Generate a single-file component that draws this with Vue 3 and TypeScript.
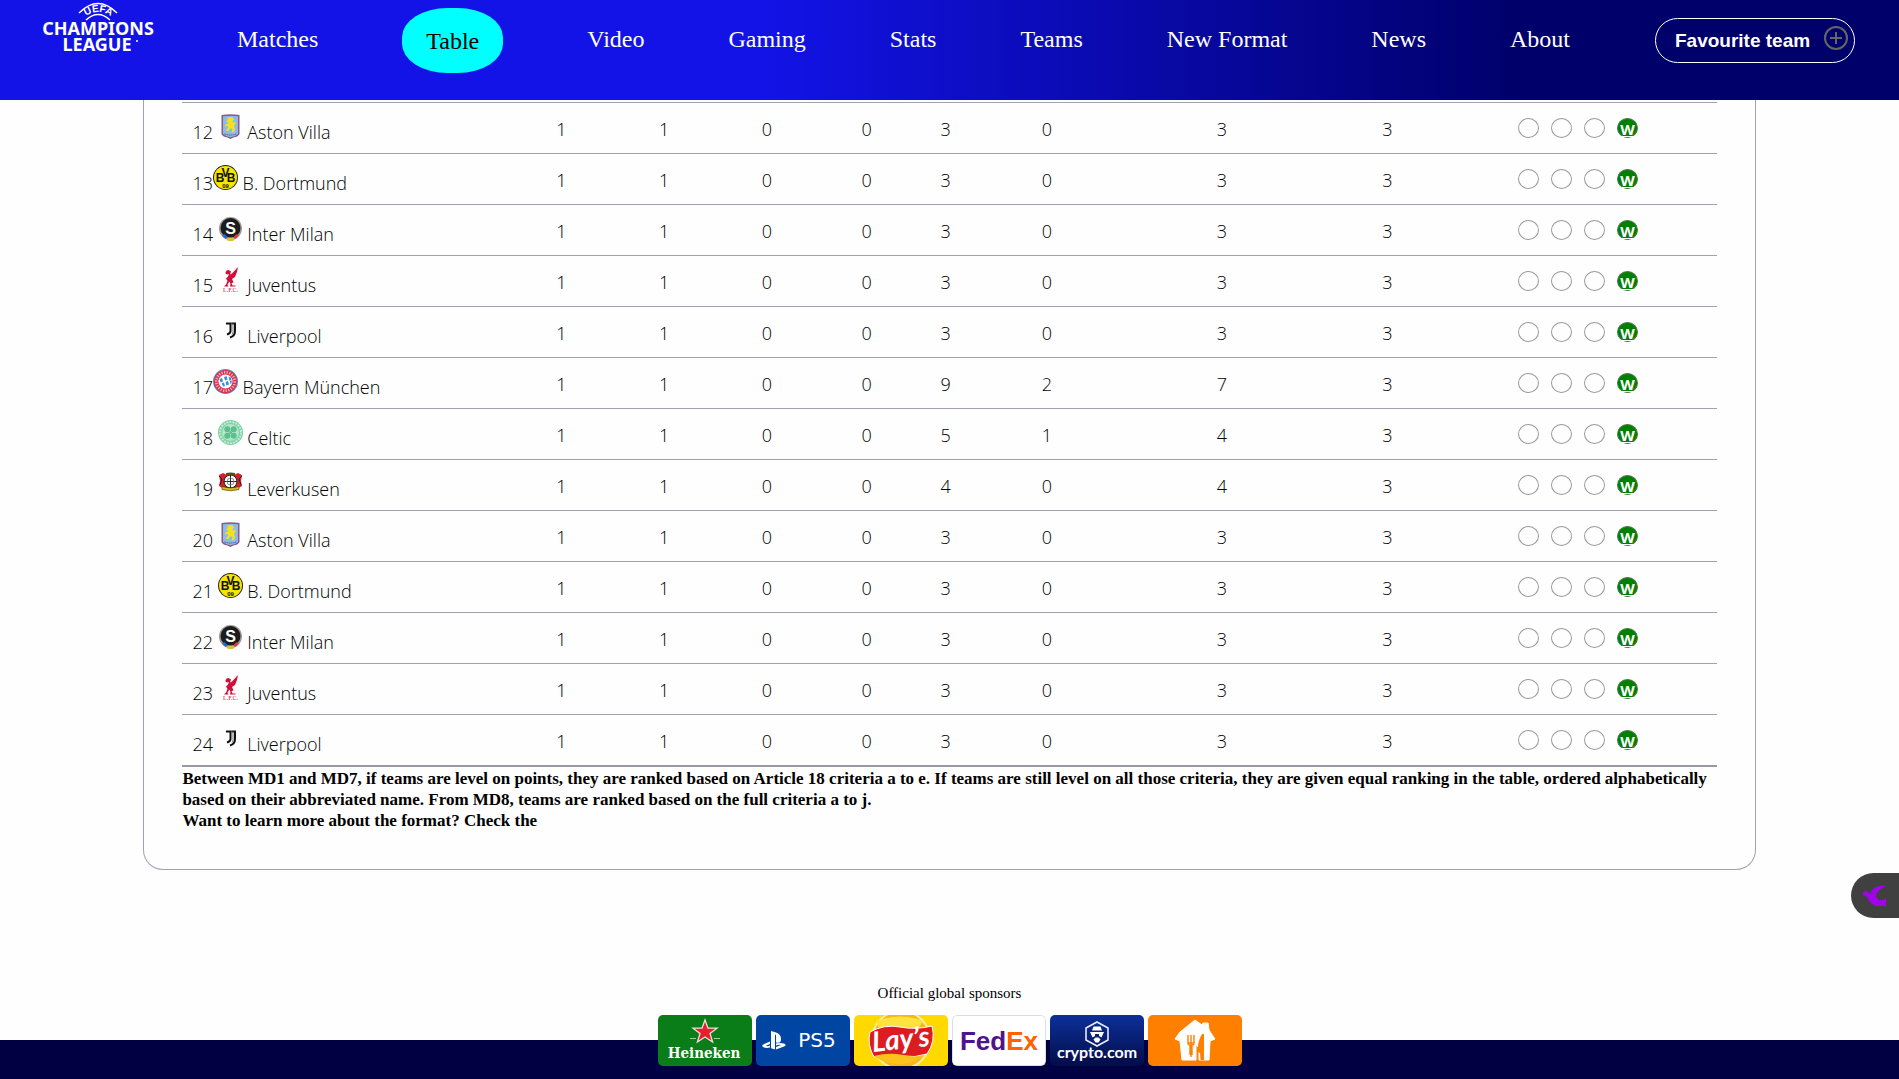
<script setup lang="ts">
type Crest = 'villa' | 'bvb' | 'sparta' | 'lfc' | 'juve' | 'bayern' | 'celtic' | 'leverkusen'

interface Team {
  rank: number
  name: string
  crest: Crest
  stats: number[]
  tight?: boolean
}

const links: string[] = ['Matches', 'Table', 'Video', 'Gaming', 'Stats', 'Teams', 'New Format', 'News', 'About']
const active = 'Table'
const columns: string[] = ['Played', 'Won', 'Drawn', 'Lost', 'For', 'Against', 'Goal difference', 'Points']

const usual = [1, 1, 0, 0, 3, 0, 3, 3]

const teams: Team[] = [
  { rank: 12, name: 'Aston Villa', crest: 'villa', stats: usual },
  { rank: 13, name: 'B. Dortmund', crest: 'bvb', stats: usual, tight: true },
  { rank: 14, name: 'Inter Milan', crest: 'sparta', stats: usual },
  { rank: 15, name: 'Juventus', crest: 'lfc', stats: usual },
  { rank: 16, name: 'Liverpool', crest: 'juve', stats: usual },
  { rank: 17, name: 'Bayern München', crest: 'bayern', stats: [1, 1, 0, 0, 9, 2, 7, 3], tight: true },
  { rank: 18, name: 'Celtic', crest: 'celtic', stats: [1, 1, 0, 0, 5, 1, 4, 3] },
  { rank: 19, name: 'Leverkusen', crest: 'leverkusen', stats: [1, 1, 0, 0, 4, 0, 4, 3] },
  { rank: 20, name: 'Aston Villa', crest: 'villa', stats: usual },
  { rank: 21, name: 'B. Dortmund', crest: 'bvb', stats: usual },
  { rank: 22, name: 'Inter Milan', crest: 'sparta', stats: usual },
  { rank: 23, name: 'Juventus', crest: 'lfc', stats: usual },
  { rank: 24, name: 'Liverpool', crest: 'juve', stats: usual },
]
</script>

<template>
  <div class="page">
    <header class="bar">
      <a class="logo" href="#" aria-label="UEFA Champions League">
        <svg viewBox="0 0 112 60" width="112" height="60" fill="#fff">
          <defs><path id="arc" d="M37 21Q55 3 74 21" /></defs>
          <path d="M36 13Q55 -6 74 13" fill="none" stroke="#fff" stroke-width="1.500" />
          <path d="M43 20Q55 9 67 20" fill="none" stroke="#fff" stroke-width="1.500" />
          <text class="uefa"><textPath href="#arc" startOffset="50%" text-anchor="middle">UEFA</textPath></text>
          <text class="word" x="55" y="35" text-anchor="middle">CHAMPIONS</text>
          <text class="word" x="54" y="51" text-anchor="middle">LEAGUE</text>
          <circle cx="94" cy="41" r="1" />
        </svg>
      </a>
      <nav class="nav">
        <a v-for="l in links" :key="l" href="#" :class="{ active: l === active }">{{ l }}</a>
      </nav>
      <button class="fav" type="button">
        Favourite team
        <svg viewBox="0 0 26 26" width="26" height="26" fill="none" stroke="#666" stroke-width="2">
          <circle cx="13" cy="13" r="11" />
          <path d="M13 7v12M7 13h12" />
        </svg>
      </button>
    </header>

    <main class="card">
      <table>
        <colgroup>
          <col class="c-team" /><col class="c1" /><col class="c2" /><col class="c3" /><col class="c4" />
          <col class="c5" /><col class="c6" /><col class="c7" /><col class="c8" /><col class="c-form" />
        </colgroup>
        <tbody>
          <tr v-for="t in teams" :key="t.rank">
            <th scope="row" class="team">{{ t.tight ? t.rank : t.rank + ' ' }}<svg class="crest" viewBox="0 0 25 25" width="25" height="25" aria-hidden="true">
                <g v-if="t.crest === 'villa'">
                  <path d="M3.500 1Q12.500 -.5 21.500 1V20Q20 23 15.500 23.500L12.500 25L9.500 23.500Q5 23 3.500 20Z" fill="#8b5a80" />
                  <path d="M5 2.300Q12.500 1 20 2.300V19.500Q18.500 22 12.500 23.300Q6.500 22 5 19.500Z" fill="#8dbbe8" />
                  <path d="M9 5l2-2 4 .5 1 2-1.500 1.500 1 2 2-1.500v2.500l-1.500 2 1 3-1 3-2.500.5 1-3-2-1.500-2 3-2.500 0 1-2 1.500-2-1-1-2 .5-.5-2 3-.5-.5-2-1.500-.5 1-1.500 2 .5z" fill="#f6e11c" />
                  <path d="M6.500 20Q12.500 22 18.500 20" stroke="#4a5b86" fill="none" stroke-dasharray="1.500 .6" />
                </g>
                <g v-else-if="t.crest === 'bvb'">
                  <circle cx="12.500" cy="12.500" r="12.500" fill="#222" />
                  <circle cx="12.500" cy="12.500" r="11.500" fill="#f7e600" />
                  <g fill="#111" font-family="Liberation Sans" font-weight="700" text-anchor="middle">
                    <text x="7" y="17" font-size="12">B</text>
                    <text x="12.500" y="12" font-size="12">V</text>
                    <text x="18" y="17" font-size="12">B</text>
                    <text x="12.500" y="22.500" font-size="6">09</text>
                  </g>
                </g>
                <g v-else-if="t.crest === 'sparta'">
                  <circle cx="12.500" cy="12.500" r="11.500" fill="#999" />
                  <circle cx="12.500" cy="12" r="10" fill="#1c1c1c" />
                  <path d="M4 19l3.500 4 2-2-3-3z" fill="#2864d8" />
                  <path d="M9.500 21.500h6V25h-6z" fill="#d8c23a" />
                  <path d="M21 19l-3.500 4-2-2 3-3z" fill="#e2333a" />
                  <text x="12.500" y="17.500" fill="#fff" font-family="Liberation Sans" font-weight="700" font-size="16" text-anchor="middle">S</text>
                </g>
                <g v-else-if="t.crest === 'lfc'" fill="#d0103a">
                  <path d="M7.500 6.500Q7.500 3 10.500 3L13 4.500 12 7.500 14 6.500 20 0 19 5 17 10 14 12 15.500 15.500 13.500 16 14.500 18.500H17.500V19.500H12L12.500 17 11.500 14.500 9.500 17.500 10.500 19.500H6L8 17.500 9.500 14 8 11.500 10 9.500 11 7 9 7.500Z" />
                  <text x="12.500" y="25" font-family="Liberation Serif" font-size="6" text-anchor="middle">L.F.C.</text>
                </g>
                <g v-else-if="t.crest === 'juve'" fill="none" stroke="#111" stroke-width="2">
                  <path d="M8 5.500h4.500V13q0 2.500-3.500 3.500" />
                  <path d="M13.500 5.500H17V13q0 5-5 6.500" />
                  <path d="M15 5.500v8q0 2-1 3" stroke="#777" stroke-width="1" />
                </g>
                <g v-else-if="t.crest === 'bayern'">
                  <circle cx="12.500" cy="12.500" r="12.500" fill="#4f8fc8" />
                  <circle cx="12.500" cy="12.500" r="11.500" fill="#e2304c" />
                  <circle cx="12.500" cy="12.500" r="9.200" fill="none" stroke="#f3b6c0" stroke-width="2.600" stroke-dasharray="1.200 1.400" />
                  <circle cx="12.500" cy="12.500" r="7" fill="#fff" />
                  <path d="M6.500 10l2.500-1 1 3.500-2.500 1zM11 8l2.500-1 1 3.500-2.500 1zM15.500 7.500l2.500 1 .5 2.500-2 .7zM8.500 14.500l2.500-1 1 3.500-1.500.7zM12.500 13l2.500-1 1 3.500-2.500 1zM17 12l2-.6-.6 3-1 .8z" fill="#3b8fd4" />
                </g>
                <g v-else-if="t.crest === 'celtic'">
                  <circle cx="12.500" cy="12.500" r="12.500" fill="#7ccfa2" />
                  <circle cx="12.500" cy="12.500" r="10.500" fill="none" stroke="#c4ecd6" stroke-width="2" stroke-dasharray="2 1" />
                  <circle cx="12.500" cy="12.500" r="8.500" fill="#b4e6ca" />
                  <g fill="#5fbf8c">
                    <circle cx="9.300" cy="9.300" r="3" /><circle cx="15.700" cy="9.300" r="3" />
                    <circle cx="9.300" cy="15.700" r="3" /><circle cx="15.700" cy="15.700" r="3" />
                    <circle cx="12.500" cy="12.500" r="1.500" />
                  </g>
                </g>
                <g v-else>
                  <path d="M1 4l4-2 4 2 7 0 4-2 4 2-1 6 1 5-5 3H6l-5-3 1-5z" fill="#d3202c" />
                  <path d="M1 5l3 3-2 6M24 5l-3 3 2 6" fill="none" stroke="#222" />
                  <circle cx="12.500" cy="10.500" r="6.500" fill="#fff" stroke="#222" />
                  <path d="M12.500 4v13M6 10.500h13" stroke="#222" />
                  <circle cx="12.500" cy="10.500" r="3.500" fill="none" stroke="#888" />
                  <path d="M8 2q4.500-1 9 0v2.500q-4.500-1-9 0z" fill="#5a4e10" />
                  <path d="M4 15.500q8.500 3 17 0v3q-8.500 2.500-17 0z" fill="#d6b91e" stroke="#44390a" stroke-width=".6" />
                </g>
              </svg>{{ ' ' + t.name }}</th>
            <td v-for="(s, i) in t.stats" :key="columns[i]">{{ s }}</td>
            <td>
              <div class="form">
                <span></span><span></span><span></span><a href="#">W</a>
              </div>
            </td>
          </tr>
        </tbody>
      </table>
      <p class="note">
        Between MD1 and MD7, if teams are level on points, they are ranked based on Article 18 criteria a to e. If teams
        are still level on all those criteria, they are given equal ranking in the table, ordered alphabetically based on
        their abbreviated name. From MD8, teams are ranked based on the full criteria a to j.<br />Want to learn more
        about the format? Check the
      </p>
    </main>

    <p class="caption">Official global sponsors</p>
    <footer class="foot">
      <ul class="sponsors">
        <li>
          <svg viewBox="0 0 94 51" aria-label="Heineken">
            <rect width="94" height="51" fill="#0a7d18" />
            <path d="M47 5l3 8.200h9l-7 5.300 2.600 8.500L47 22l-7.600 5 2.600-8.500-7-5.300h9z" fill="#e3222c" stroke="#f2dcdc" stroke-width="1.300" />
            <path d="M32 23.500h6M56 23.500h6" stroke="#9fd0a4" />
            <text x="46" y="43" class="heineken">Heineken</text>
          </svg>
        </li>
        <li>
          <svg viewBox="0 0 94 51" aria-label="PS5">
            <rect width="94" height="51" fill="#0145a3" />
            <g fill="#fff">
              <path d="M15 16l5 1.500q5 1.500 5 6.500 0 5-5 3.500v-7q0-1-1-1v15l-4-1.300z" />
              <path d="M14 26.500v2.500l-4 1.800q1.500.8 4-.2v2q-4 1-7-.6-2-1.500 1-3z" />
              <path d="M20 28.500q5-1.300 9 .5 1.500 1.500-1 2.500l-8 3v-2.500l5-2q-2-.6-5 .5z" />
            </g>
            <text x="61" y="32" class="ps">PS5</text>
          </svg>
        </li>
        <li>
          <svg viewBox="0 0 94 51" aria-label="Lay's">
            <rect width="94" height="51" fill="#ffd900" />
            <circle cx="47" cy="25" r="29" fill="#f9b51c" stroke="#fff0a0" stroke-width="2" />
            <path d="M22 6q25-9 47 0l-4 7H25z" fill="#ffe23c" />
            <path d="M16 17q14-8 30-5t32-1q4 15-5 28-12 4-24 2t-29 1q-7-12-4-25z" fill="#df1b22" stroke="#fff" />
            <path d="M20 41q15-4 29-1t22 0q-8 7-22 9-17 1-29-8z" fill="#fbc21c" />
            <text x="47" y="34" class="lays" transform="rotate(-6 47 26)">Lay’s</text>
          </svg>
        </li>
        <li>
          <svg viewBox="0 0 94 51" aria-label="FedEx">
            <rect x=".5" y=".5" width="93" height="50" rx="4" fill="#fff" stroke="#ddd" />
            <text x="47" y="35" class="fedex"><tspan fill="#4d148c">Fed</tspan><tspan fill="#ff6200">Ex</tspan></text>
          </svg>
        </li>
        <li>
          <svg viewBox="0 0 94 51" aria-label="crypto.com">
            <defs>
              <linearGradient id="navy" x2="0" y2="1"><stop stop-color="#0d309a" /><stop offset="1" stop-color="#020c48" /></linearGradient>
            </defs>
            <rect width="94" height="51" fill="url(#navy)" />
            <path d="M47 7l11 6v12l-11 6-11-6V13z" fill="none" stroke="#e8ecf8" stroke-width="1.600" />
            <path d="M43.500 11.500h7l1.500 4H42zM40 17h14l-2.500 5.500L49 21V19h-4v2l-2.500 1.500zM43.500 24.500l2-2h3l2 2-2 3h-3z" fill="#fff" />
            <text x="47" y="43" class="crypto">crypto.com</text>
          </svg>
        </li>
        <li>
          <svg viewBox="0 0 94 51" aria-label="Just Eat Takeaway">
            <rect width="94" height="51" fill="#ff8000" />
            <path d="M47 5l7 5 1-2h5l1 7 6 9-5 2-1 19H51V33l-3-3V45H34L32 26l-5-2 5-7z" fill="#fff" stroke="#fff" stroke-linejoin="round" />
            <path d="M40 20v8q0 2 2 2v10M46 20v8q0 2-2 2v10M43 20v22M39.500 28h7" fill="none" stroke="#ff8000" stroke-width="1.400" />
            <path d="M54 19q-5 8-4 18l2 1 .5 7H56V20q0-2-2-1z" fill="#ff8000" />
          </svg>
        </li>
      </ul>
    </footer>

    <button class="widget" type="button" aria-label="Open assistant">
      <svg viewBox="0 0 24 22" width="24" height="22">
        <path d="M0 8Q1 5 5 7L7 9Q10 2 16 1Q20 0 23 1Q14 5 13 10Q13 14 17 15Q22 16 23 12V21H14Q8 20 5 14Q3 10 0 10Z" fill="#a300ee" />
      </svg>
    </button>
  </div>
</template>

<style>
body {
  margin: 0;
  background: #fefefe;
}
</style>

<style scoped>
.page {
  position: relative;
  display: flex;
  flex-direction: column;
  min-height: 100vh;
  font-family: 'Liberation Serif', 'Times New Roman', serif;
  color: #000;
}
.bar {
  display: flex;
  align-items: flex-start;
  box-sizing: border-box;
  height: 100px;
  padding: 0 44px 0 43px;
  background: linear-gradient(90deg, #1313e8 40%, #00006b 80%);
}
.logo svg {
  display: block;
  overflow: visible;
}
.uefa {
  font: 700 10px 'Liberation Sans', sans-serif;
}
.word {
  font: 700 18px 'Noto Sans', sans-serif;
}
.nav {
  display: flex;
  flex: 1;
  align-items: flex-start;
  justify-content: space-between;
  padding: 8px 85px 0 82px;
}
.nav a {
  font-size: 24px;
  line-height: 63px;
  color: #fff;
  text-decoration: none;
  white-space: nowrap;
}
.nav a.active {
  padding: 2px 24px 0;
  color: #000;
  background: #0ff;
  border-radius: 45%;
}
.fav {
  display: flex;
  align-items: center;
  justify-content: space-between;
  box-sizing: border-box;
  width: 200px;
  height: 45px;
  margin-top: 18px;
  padding: 0 5px 0 19px;
  font: 700 19px 'Liberation Sans', Arial, sans-serif;
  color: #fff;
  white-space: nowrap;
  background: transparent;
  border: 1px solid #fff;
  border-radius: 23px;
}
.fav svg {
  margin-bottom: 5px;
}
.card {
  box-sizing: border-box;
  width: 84.9%;
  margin: 0 auto;
  padding: 2px 38px 38px;
  border: 1px solid #a2a0b5;
  border-top: 0;
  border-radius: 0 0 20px 20px;
}
table {
  width: 100%;
  table-layout: fixed;
  border-collapse: separate;
  border-spacing: 0;
  border-top: 1px solid #a2a0b5;
  font: 300 18px/24px 'Open Sans', 'Noto Sans', sans-serif;
}
.c-team { width: 21.4%; }
.c1, .c3 { width: 6.6%; }
.c2 { width: 6.8%; }
.c4 { width: 6.4%; }
.c5 { width: 3.9%; }
.c6 { width: 9.3%; }
.c7 { width: 13.5%; }
.c8 { width: 8.1%; }
.c-form { width: 17.4%; }
th,
td {
  box-sizing: border-box;
  height: 51px;
  padding: 2px 0 0;
  font-weight: 300;
  text-align: center;
  border-bottom: 1px solid #a2a0b5;
}
tr:last-child > * {
  height: 52px;
  border-bottom: 2px solid #9a98a6;
}
th.team {
  padding-left: 10px;
  text-align: left;
  white-space: nowrap;
}
.crest {
  vertical-align: baseline;
}
.form {
  display: flex;
  gap: 12px;
  justify-content: center;
  padding: 0 10px 2px 0;
}
.form > * {
  box-sizing: border-box;
  width: 21px;
  height: 20px;
  border: 1px solid #999;
  border-radius: 50%;
}
.form a {
  font: 700 15px/20px 'Open Sans', sans-serif;
  color: #fff;
  background: #008000;
  border-color: #4a7a4a;
}
.note {
  margin: 0;
  padding-top: 1px;
  font-size: 17px;
  font-weight: 700;
  line-height: 21px;
}
.caption {
  margin: 115px 0 0;
  font-size: 15px;
  line-height: 17px;
  text-align: center;
}
.foot {
  flex: 1;
  margin-top: 38px;
  background: #000042;
}
.sponsors {
  display: flex;
  gap: 4px;
  justify-content: center;
  margin: -25px 0 0;
  padding: 0;
  list-style: none;
}
.sponsors li {
  width: 94px;
  height: 51px;
  overflow: hidden;
  border-radius: 5px;
}
.sponsors svg {
  display: block;
  width: 100%;
  height: 100%;
}
.sponsors text {
  fill: #fff;
  text-anchor: middle;
}
.sponsors .heineken {
  font: 700 15px 'DejaVu Serif Condensed', 'DejaVu Serif', serif;
}
.sponsors .ps {
  font: 400 20px 'DejaVu Sans', sans-serif;
}
.sponsors .lays {
  font: italic 700 28px 'Lato', sans-serif;
}
.sponsors .fedex {
  font: 700 26px 'Liberation Sans', sans-serif;
}
.sponsors .crypto {
  font: 700 16px 'Lato', sans-serif;
}
.widget {
  position: absolute;
  top: 873px;
  right: 0;
  display: flex;
  align-items: center;
  width: 48px;
  height: 45px;
  padding: 0 0 0 12px;
  background: #404040;
  border: 0;
  border-radius: 23px 0 0 23px;
}
</style>
